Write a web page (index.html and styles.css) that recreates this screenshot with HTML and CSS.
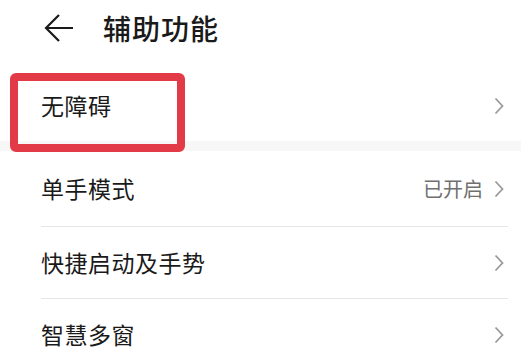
FILE: index.html
```html
<!DOCTYPE html>
<html lang="zh-CN">
<head>
<meta charset="utf-8">
<link rel="stylesheet" href="styles.css">
</head>
<body>
<header class="header">
  <svg class="back" width="30" height="28" viewBox="0 0 30 28"><path d="M29 14H2M15 1L2 14l13 13" fill="none" stroke="#1a1a1a" stroke-width="2.2" stroke-linejoin="miter"/></svg>
  <h1 class="title">辅助功能</h1>
</header>
<section class="group first">
  <div class="row">
    <span class="label">无障碍</span>
    <svg class="chev" width="10" height="18" viewBox="0 0 10 18"><path d="M1.5 1.5L8.5 9L1.5 16.5" fill="none" stroke="#9a9a9a" stroke-width="1.8"/></svg>
  </div>
  <div class="highlight"></div>
</section>
<div class="band"></div>
<section class="group">
  <div class="row tall">
    <span class="label">单手模式</span>
    <span class="value">已开启</span>
    <svg class="chev" width="10" height="18" viewBox="0 0 10 18"><path d="M1.5 1.5L8.5 9L1.5 16.5" fill="none" stroke="#9a9a9a" stroke-width="1.8"/></svg>
  </div>
  <div class="divider"></div>
  <div class="row">
    <span class="label">快捷启动及手势</span>
    <svg class="chev" width="10" height="18" viewBox="0 0 10 18"><path d="M1.5 1.5L8.5 9L1.5 16.5" fill="none" stroke="#9a9a9a" stroke-width="1.8"/></svg>
  </div>
  <div class="divider"></div>
  <div class="row">
    <span class="label">智慧多窗</span>
    <svg class="chev" width="10" height="18" viewBox="0 0 10 18"><path d="M1.5 1.5L8.5 9L1.5 16.5" fill="none" stroke="#9a9a9a" stroke-width="1.8"/></svg>
  </div>
</section>
</body>
</html>
```

FILE: styles.css
```css
html, body {
  margin: 0;
  padding: 0;
  background: #ffffff;
  font-family: "Noto Sans CJK SC", "Noto Sans", sans-serif;
  color: #1a1a1a;
  overflow: hidden;
}
.header {
  height: 56px;
  display: flex;
  align-items: center;
  padding-left: 44px;
  gap: 29px;
}
.back {
  display: block;
  flex: none;
}
.title {
  margin: 0;
  font-size: 28px;
  font-weight: 500;
  line-height: 1;
  letter-spacing: 1px;
}
.group {
  position: relative;
}
.group.first {
  margin-top: 14px;
}
.row {
  height: 71px;
  display: flex;
  align-items: center;
  padding-left: 41px;
  padding-right: 17px;
}
.row.tall {
  height: 75px;
}
.label {
  font-size: 23px;
  line-height: 1;
  flex: 1;
  letter-spacing: 0.5px;
}
.value {
  font-size: 20px;
  color: #707070;
  margin-right: 11px;
  line-height: 1;
}
.chev {
  display: block;
  flex: none;
}
.divider {
  height: 1px;
  background: #e6e6e6;
  margin-left: 41px;
  margin-right: 13px;
}
.band {
  height: 10px;
  background: #f7f7f7;
}
.highlight {
  position: absolute;
  left: 10px;
  top: 3px;
  width: 159px;
  height: 63px;
  border: 8px solid #e33a48;
  border-radius: 6px;
}
```
